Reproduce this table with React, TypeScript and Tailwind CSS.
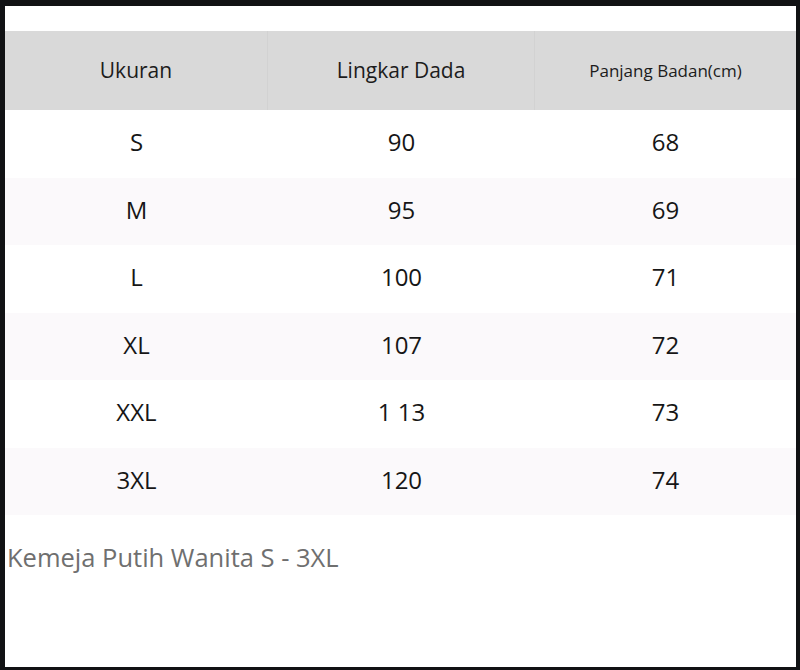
const rows = [
  { size: "S", chest: "90", length: "68" },
  { size: "M", chest: "95", length: "69" },
  { size: "L", chest: "100", length: "71" },
  { size: "XL", chest: "107", length: "72" },
  { size: "XXL", chest: "1 13", length: "73" },
  { size: "3XL", chest: "120", length: "74" },
];

export default function App() {
  return (
    <div className="w-[800px] h-[670px] bg-[#111214] pt-[6px] pl-[5px] pr-[4px] pb-[3px]">
      <div
        className="h-full bg-white pt-[25px]"
        style={{ fontFamily: '"Open Sans", "Noto Sans", sans-serif' }}
      >
        {/* Table header */}
        <div className="grid grid-cols-[263px_267px_1fr] h-[79px] bg-[#d9d9d9] text-[#1c1c1c]">
          <div className="flex items-center justify-center text-[21px] border-r border-[#d2d2d2]">
            Ukuran
          </div>
          <div className="flex items-center justify-center text-[21px] border-r border-[#d2d2d2]">
            Lingkar Dada
          </div>
          <div className="flex items-center justify-center text-[17px]">
            Panjang Badan(cm)
          </div>
        </div>

        {/* Table body */}
        {rows.map((r, i) => (
          <div
            key={r.size}
            className={`grid grid-cols-[263px_267px_1fr] h-[67.5px] pb-[3px] text-[24px] text-[#161616] ${
              i % 2 === 1 ? "bg-[#fbf9fb]" : "bg-white"
            }`}
          >
            <div className="flex items-center justify-center">{r.size}</div>
            <div className="flex items-center justify-center">{r.chest}</div>
            <div className="flex items-center justify-center">{r.length}</div>
          </div>
        ))}

        <p className="mt-[26px] pl-[2px] text-[25.5px] text-[#6f6f6f] leading-[32px]">
          Kemeja Putih Wanita S - 3XL
        </p>
      </div>
    </div>
  );
}
